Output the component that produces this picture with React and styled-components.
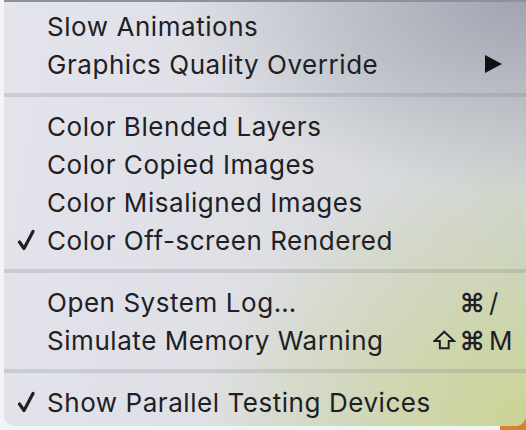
import React from "react";
import styled, { createGlobalStyle } from "styled-components";

const GlobalStyle = createGlobalStyle`
  html, body {
    margin: 0;
    padding: 0;
    background: #eef0f2;
  }
  body {
    font-family: Inter, "Noto Sans", "Liberation Sans", sans-serif;
  }
`;

const Page = styled.div`
  width: 526px;
  height: 430px;
  overflow: hidden;
  display: flex;
  background: linear-gradient(90deg, #f4f4f6 0, #f4f4f6 500px, #d9822b 500px);
`;

const Menu = styled.div`
  margin-left: 4px;
  width: 522px;
  height: 426px;
  box-sizing: border-box;
  border-top: 2px solid #8d919b;
  border-radius: 0 0 11px 11px;
  padding-top: 5px;
  display: flex;
  flex-direction: column;
  color: #202024;
  background:
    radial-gradient(ellipse 330px 270px at 100% 100%, rgba(202, 213, 145, 0.95), rgba(202, 213, 145, 0) 100%),
    radial-gradient(ellipse 360px 190px at 100% 0%, rgba(158, 162, 175, 0.95), rgba(158, 162, 175, 0) 100%),
    linear-gradient(100deg, #e3e4ec 0%, #dfe0e6 45%, #cfd3d2 100%);
`;

const Item = styled.div`
  height: 38px;
  display: flex;
  align-items: center;
  padding-left: 13px;
  padding-right: ${(p) => p.$pad || 24}px;
  font-size: 26px;
  letter-spacing: 0.55px;
`;

const CheckBox = styled.span`
  width: 30px;
  flex: none;
  display: flex;
  align-items: center;
`;

const Label = styled.span`
  flex: 1;
  white-space: nowrap;
`;

const Shortcut = styled.span`
  display: flex;
  align-items: center;
  font-size: 26px;
  letter-spacing: 0;
`;

const Modifiers = styled.span`
  display: flex;
  align-items: center;
  justify-content: flex-end;
  gap: 4px;
  width: 52px;
  font-weight: 600;
`;

const Key = styled.span`
  width: 24px;
  margin-left: 4px;
`;

const Arrow = styled.svg`
  width: 18px;
  height: 18px;
`;

const ShiftIcon = styled.svg`
  width: 23px;
  height: 20px;
`;

const Separator = styled.div`
  height: 4px;
  margin: 10px 0;
  background: rgba(120, 124, 130, 0.22);
`;

function CheckIcon() {
  return (
    <svg width="18" height="22" viewBox="0 0 18 22">
      <path
        d="M2.5 13 L7 19.5 L16 2.5"
        fill="none"
        stroke="#202024"
        strokeWidth="3.2"
        strokeLinecap="round"
        strokeLinejoin="round"
      />
    </svg>
  );
}

function Row({ checked, label, mods, keyName, submenu }) {
  return (
    <Item $pad={mods ? 13 : 24}>
      <CheckBox>{checked && <CheckIcon />}</CheckBox>
      <Label>{label}</Label>
      {mods && (
        <Shortcut>
          <Modifiers>
            {mods.includes("shift") && (
              <ShiftIcon viewBox="0 0 23 20">
                <path
                  d="M11.5 1.5 L21.5 11 L16 11 L16 18.5 L7 18.5 L7 11 L1.5 11 Z"
                  fill="none"
                  stroke="#202024"
                  strokeWidth="2"
                  strokeLinejoin="miter"
                />
              </ShiftIcon>
            )}
            <span>⌘</span>
          </Modifiers>
          <Key>{keyName}</Key>
        </Shortcut>
      )}
      {submenu && (
        <Arrow viewBox="0 0 18 18">
          <path d="M1 0 L18 9 L1 18 Z" fill="#111" />
        </Arrow>
      )}
    </Item>
  );
}

export default function App() {
  return (
    <>
      <GlobalStyle />
      <Page>
        <Menu>
          <Row label="Slow Animations" />
          <Row label="Graphics Quality Override" submenu />
          <Separator />
          <Row label="Color Blended Layers" />
          <Row label="Color Copied Images" />
          <Row label="Color Misaligned Images" />
          <Row checked label="Color Off-screen Rendered" />
          <Separator />
          <Row label="Open System Log…" mods={["cmd"]} keyName="/" />
          <Row label="Simulate Memory Warning" mods={["shift", "cmd"]} keyName="M" />
          <Separator />
          <Row checked label="Show Parallel Testing Devices" />
        </Menu>
      </Page>
    </>
  );
}
